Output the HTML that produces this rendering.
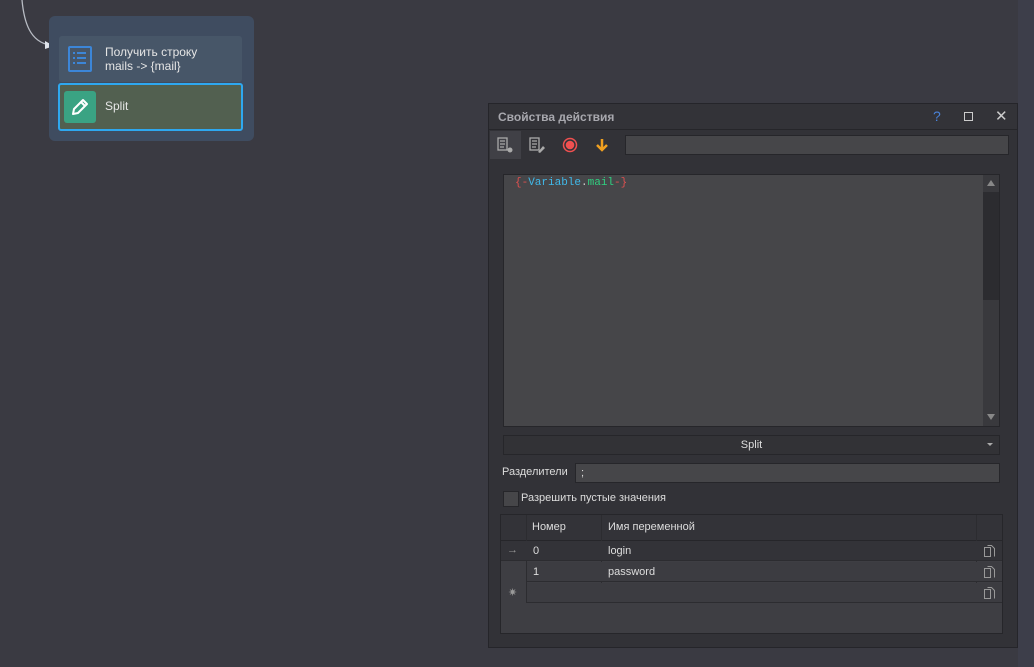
<!DOCTYPE html>
<html><head><meta charset="utf-8"><style>
*{box-sizing:border-box;margin:0;padding:0}
body{width:1034px;height:667px;background:#3a3a42;font-family:"Liberation Sans","DejaVu Sans",sans-serif;font-size:11px;color:#ddd;position:relative;overflow:hidden}
.a{position:absolute}
</style></head><body>
<svg class="a" style="left:0;top:0" width="70" height="60"><path d="M22 0 C24 22 30 42 50 45" stroke="#b8bcc4" stroke-width="1.3" fill="none"/><path d="M45 41 L54 46 L45 49 Z" fill="#dfe3ea"/><circle cx="58" cy="46" r="3.5" fill="#555" stroke="#bbb" stroke-width="1.3"/></svg>
<div class="a" style="left:49px;top:16px;width:205px;height:125px;background:#3f4c60;border-radius:6px"></div>
<div class="a" style="left:59px;top:36px;width:183px;height:46px;background:#475668;border-radius:3px"></div>
<div class="a" style="left:68px;top:46px;width:24px;height:26px;border:2px solid #3c86d8;border-radius:2px"></div>
<svg class="a" style="left:72px;top:51px" width="16" height="16"><g fill="#3c86d8"><rect x="1" y="1" width="2" height="2"/><rect x="5" y="1" width="9" height="2"/><rect x="1" y="6" width="2" height="2"/><rect x="5" y="6" width="9" height="2"/><rect x="1" y="11" width="2" height="2"/><rect x="5" y="11" width="9" height="2"/></g></svg>
<div class="a" style="left:105px;top:45px;line-height:14px;font-size:12px;color:#e6e6e6">Получить строку<br>mails -&gt; {mail}</div>
<div class="a" style="left:58px;top:83px;width:185px;height:48px;background:#526050;border:2px solid #2ea8f0;border-radius:3px"></div>
<div class="a" style="left:64px;top:91px;width:32px;height:32px;background:#3aa383;border-radius:3px"></div>
<svg class="a" style="left:68px;top:95px" width="24" height="24"><path d="M5 19 L6 14 L15 5 L19 9 L10 18 Z M13 7 L17 11" stroke="#fff" stroke-width="2" fill="none" stroke-linejoin="round"/></svg>
<div class="a" style="left:105px;top:99px;color:#e6e6e6;font-size:12px">Split</div>

<div class="a" style="left:1018px;top:0;width:16px;height:667px;background:#3d3e4a"></div>
<div class="a" style="left:488px;top:103px;width:530px;height:545px;background:#323237;border:1px solid #25252a"></div>
<div class="a" style="left:489px;top:104px;width:528px;height:26px;background:#333338;border-bottom:1px solid #26262a"></div>
<div class="a" style="left:498px;top:110px;font-weight:bold;color:#a8a8ae;font-size:12px">Свойства действия</div>
<div class="a" style="left:933px;top:108px;color:#4a82d8;font-size:14px">?</div>
<div class="a" style="left:964px;top:112px;width:9px;height:9px;border:1.5px solid #ccc"></div>
<div class="a" style="left:995px;top:107px;color:#ccc;font-size:15px">✕</div>
<div class="a" style="left:490px;top:131px;width:31px;height:28px;background:#404046"></div>
<svg class="a" style="left:497px;top:137px" width="120" height="18"><g stroke="#aaa" fill="none" stroke-width="1.3"><rect x="1" y="1" width="9" height="12"/><path d="M3 4h5M3 7h5M3 10h4"/><rect x="33" y="1" width="9" height="12"/><path d="M35 4h5M35 7h5M35 10h4"/></g><circle cx="13" cy="13" r="2.5" fill="#aaa"/><path d="M41 15 L46 9 L48 11 L43 16Z" fill="#aaa"/><circle cx="73" cy="8" r="6.5" stroke="#f05050" stroke-width="1.5" fill="none"/><circle cx="73" cy="8" r="4.3" fill="#f05050"/><path d="M105 2 V13 M100 8 L105 13 L110 8" stroke="#f0a020" stroke-width="2.5" fill="none"/></svg>
<div class="a" style="left:625px;top:135px;width:384px;height:20px;background:#464649;border:1px solid #26262a"></div>
<div class="a" style="left:503px;top:174px;width:497px;height:253px;background:#464649;border:1px solid #26262a"></div>
<div class="a" style="left:983px;top:175px;width:16px;height:251px;background:#39393d"></div>
<div class="a" style="left:983px;top:192px;width:16px;height:108px;background:#2c2c30"></div>
<div class="a" style="left:987px;top:180px;width:0;height:0;border-left:4px solid transparent;border-right:4px solid transparent;border-bottom:6px solid #888"></div>
<div class="a" style="left:987px;top:414px;width:0;height:0;border-left:4px solid transparent;border-right:4px solid transparent;border-top:6px solid #888"></div>
<div class="a" style="left:515px;top:177px;font-family:'Liberation Mono',monospace;font-size:11px"><span style="color:#e05050">{-</span><span style="color:#40b8e8">Variable</span><span style="color:#ccc">.</span><span style="color:#30d080">mail</span><span style="color:#e05050">-}</span></div>
<div class="a" style="left:503px;top:435px;width:497px;height:20px;background:#323236;border:1px solid #26262a;text-align:center;line-height:18px;color:#ddd">Split</div>
<div class="a" style="left:987px;top:443px;width:0;height:0;border-left:3px solid transparent;border-right:3px solid transparent;border-top:3px solid #aaa"></div>
<div class="a" style="left:502px;top:466px;color:#ddd">Разделители</div>
<div class="a" style="left:575px;top:463px;width:425px;height:20px;background:#464649;border:1px solid #26262a;padding-left:5px;line-height:18px;color:#ddd">;</div>
<div class="a" style="left:503px;top:491px;width:16px;height:16px;background:#464649;border:1px solid #26262a"></div>
<div class="a" style="left:521px;top:492px;color:#ddd">Разрешить пустые значения</div>
<div class="a" style="left:500px;top:514px;width:503px;height:120px;background:#3e3e43;border:1px solid #26262a"></div>
<div class="a" style="left:501px;top:515px;width:501px;height:26px;background:#333338;border-bottom:1px solid #26262a"></div>
<div class="a" style="left:526px;top:515px;width:1px;height:88px;background:#2c2c30"></div>
<div class="a" style="left:601px;top:515px;width:1px;height:88px;background:#2c2c30"></div>
<div class="a" style="left:976px;top:515px;width:1px;height:88px;background:#2c2c30"></div>
<div class="a" style="left:532px;top:521px">Номер</div>
<div class="a" style="left:608px;top:521px">Имя переменной</div>
<div class="a" style="left:501px;top:541px;width:501px;height:20px;background:#333338;border-bottom:1px solid #2c2c30"></div>
<div class="a" style="left:527px;top:562px;width:475px;height:20px;background:#3c3c41;border-bottom:1px solid #2c2c30"></div>
<div class="a" style="left:527px;top:583px;width:475px;height:20px;background:#3c3c41;border-bottom:1px solid #2c2c30"></div>
<div class="a" style="left:507px;top:544px;color:#999">→</div>
<div class="a" style="left:508px;top:586px;color:#999;font-size:11px">✷</div>
<div class="a" style="left:533px;top:545px">0</div><div class="a" style="left:608px;top:545px">login</div>
<div class="a" style="left:533px;top:566px">1</div><div class="a" style="left:608px;top:566px">password</div>
<svg class="a" style="left:982px;top:544px" width="16" height="60"><g stroke="#999" fill="none"><path d="M2.5 3.5h6v9h-6zM5.5 1.5h4l3 3v8"/><path d="M2.5 24.5h6v9h-6zM5.5 22.5h4l3 3v8"/><path d="M2.5 45.5h6v9h-6zM5.5 43.5h4l3 3v8"/></g></svg>
</body></html>
